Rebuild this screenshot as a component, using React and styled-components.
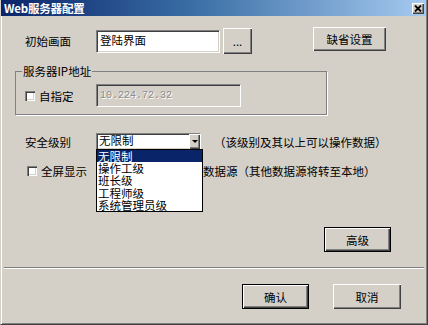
import React from 'react';
import styled, { createGlobalStyle } from 'styled-components';

const LEVELS = ['无限制', '操作工级', '班长级', '工程师级', '系统管理员级'];

const GlobalStyle = createGlobalStyle`
  html, body {
    margin: 0;
    padding: 0;
    background: #d4d0c8;
  }
  body {
    font-family: "Noto Sans CJK SC", "Liberation Sans", sans-serif;
    font-size: 11.5px;
    color: #000;
  }
`;

function App() {
  return (
    <>
      <GlobalStyle />
      <Window>
        <TitleBar>
          <Title>Web服务器配置</Title>
          <CloseButton>
            <svg width="8" height="7" viewBox="0 0 8 7">
              <path d="M1 0.5 L7 6.5 M7 0.5 L1 6.5" stroke="#000" strokeWidth="1.8" />
            </svg>
          </CloseButton>
        </TitleBar>

        <Row $top={11} $h={28}>
          <Label>初始画面</Label>
          <TextBox>登陆界面</TextBox>
          <Button $w={29} $h={26} $ml={3}>...</Button>
          <Button $w={73} $h={24} $ml={61} $mb={4}>缺省设置</Button>
        </Row>

        <Group>
          <Legend>服务器IP地址</Legend>
          <Row $h={23} $left={9}>
            <CheckItem $w={71}>
              <Check />自指定
            </CheckItem>
            <IpBox>10.224.72.32</IpBox>
          </Row>
        </Group>

        <Row $top={18} $h={17}>
          <Label>安全级别</Label>
          <Combo>
            <ComboText>无限制</ComboText>
            <ComboArrow><Arrow /></ComboArrow>
            <DropList>
              {LEVELS.map((l, i) => (
                <DropItem key={l} $active={i === 0}>{l}</DropItem>
              ))}
            </DropList>
          </Combo>
          <Hint $ml={13}>（该级别及其以上可以操作数据）</Hint>
        </Row>

        <Row $top={14} $h={14} $left={24}>
          <CheckItem $w={176}>
            <Check />全屏显示
          </CheckItem>
          <Hint>数据源（其他数据源将转至本地）</Hint>
        </Row>

        <ButtonRow $top={49} $right={34}>
          <Button $w={67} $h={25} $default>高级</Button>
        </ButtonRow>

        <Separator />

        <ButtonRow $top={15} $right={24}>
          <Button $w={67} $h={25} $default>确认</Button>
          <Button $w={68} $h={25} $ml={24}>取消</Button>
        </ButtonRow>
      </Window>
    </>
  );
}

export default App;

const Window = styled.div`
  width: 428px;
  height: 325px;
  box-sizing: border-box;
  display: flex;
  flex-direction: column;
  padding: 0 2px 2px 2px;
  background: #d4d0c8;
  border-style: solid;
  border-width: 0 1px 1px 1px;
  border-color: #d4d0c8 #404040 #404040 #d4d0c8;
  box-shadow: inset 1px 0 0 #fff, inset -1px -1px 0 #808080;
`;

const TitleBar = styled.div`
  height: 16px;
  margin: 0 -1px 0 -2px;
  padding: 0 2px 0 3px;
  display: flex;
  align-items: center;
  justify-content: space-between;
  background: linear-gradient(to right, #0a246a 0%, #3a6ea5 45%, #a6caf0 100%);
`;

const Title = styled.span`
  color: #fff;
  font-weight: bold;
  font-size: 11.5px;
  line-height: 16px;
  letter-spacing: -0.2px;
`;

const CloseButton = styled.div`
  width: 12px;
  height: 11px;
  display: flex;
  align-items: center;
  justify-content: center;
  background: #d4d0c8;
  box-shadow: inset 1px 1px 0 #fff, inset -1px -1px 0 #404040, inset -2px -2px 0 #808080;
`;

const Row = styled.div`
  display: flex;
  align-items: center;
  height: ${p => p.$h}px;
  margin-top: ${p => p.$top || 0}px;
  padding-left: ${p => (p.$left ?? 22)}px;
`;

const ButtonRow = styled.div`
  display: flex;
  justify-content: flex-end;
  margin-top: ${p => p.$top}px;
  padding-right: ${p => p.$right}px;
`;

const Label = styled.span`
  width: 71px;
  flex-shrink: 0;
  line-height: 14px;
`;

const sunken = `
  box-sizing: border-box;
  border-style: solid;
  border-width: 1px;
  border-color: #808080 #fff #fff #808080;
  box-shadow: inset 1px 1px 0 #404040, inset -1px -1px 0 #d4d0c8;
`;

const TextBox = styled.div`
  ${sunken}
  width: 124px;
  height: 23px;
  background: #fff;
  padding: 2px 3px;
  line-height: 15px;
`;

const IpBox = styled.div`
  ${sunken}
  width: 145px;
  height: 23px;
  padding: 5px 3px;
  background: #d4d0c8;
  color: #8c8c8c;
  font-family: "Liberation Mono", "DejaVu Sans Mono", monospace;
  font-size: 10px;
  line-height: 12px;
  text-shadow: 1px 1px 0 #fff;
`;

const Button = styled.div`
  box-sizing: border-box;
  width: ${p => p.$w}px;
  height: ${p => p.$h}px;
  margin-left: ${p => p.$ml || 0}px;
  margin-bottom: ${p => p.$mb || 0}px;
  display: flex;
  align-items: center;
  justify-content: center;
  background: #d4d0c8;
  line-height: 14px;
  border: ${p => (p.$default ? '1px solid #000' : 'none')};
  box-shadow: inset 1px 1px 0 #fff, inset -1px -1px 0 #404040, inset -2px -2px 0 #808080;
`;

const Group = styled.fieldset`
  box-sizing: border-box;
  width: 312px;
  margin: 8px 0 0 12px;
  padding: 5px 0 7px 0;
  border: 1px solid #808080;
  box-shadow: 1px 1px 0 #fff;
  min-inline-size: 0;
`;

const Legend = styled.legend`
  margin-left: 6px;
  padding: 0 1px;
  line-height: 16px;
  font-size: 11.5px;
`;

const CheckItem = styled.label`
  width: ${p => p.$w}px;
  flex-shrink: 0;
  display: flex;
  align-items: center;
  line-height: 14px;
`;

const Check = styled.span`
  width: 10px;
  height: 10px;
  margin-right: 4px;
  flex-shrink: 0;
  background: #fff;
  box-shadow: inset 1px 1px 0 #808080, inset 2px 2px 0 #404040,
    inset -1px -1px 0 #fff, inset -2px -2px 0 #d4d0c8;
`;

const Combo = styled.div`
  ${sunken}
  position: relative;
  width: 105px;
  height: 17px;
  display: flex;
  align-items: stretch;
  background: #fff;
`;

const ComboText = styled.span`
  flex: 1;
  padding-left: 2px;
  line-height: 13px;
`;

const ComboArrow = styled.span`
  width: 11px;
  display: flex;
  align-items: center;
  justify-content: center;
  background: #d4d0c8;
  box-shadow: inset 1px 1px 0 #fff, inset -1px -1px 0 #404040, inset -2px -2px 0 #808080;
`;

const Arrow = styled.span`
  width: 0;
  height: 0;
  border-left: 3px solid transparent;
  border-right: 3px solid transparent;
  border-top: 3px solid #000;
`;

const DropList = styled.div`
  position: absolute;
  top: 100%;
  left: -1px;
  width: 107px;
  box-sizing: border-box;
  border: 1px solid #000;
  background: #fff;
  z-index: 2;
`;

const DropItem = styled.div`
  height: 12.2px;
  padding-left: 1px;
  font-size: 11.5px;
  line-height: 12.2px;
  white-space: nowrap;
  color: ${p => (p.$active ? '#fff' : '#000')};
  background: ${p => (p.$active ? '#0a246a' : 'transparent')};
`;

const Hint = styled.span`
  margin-left: ${p => p.$ml || 0}px;
  white-space: nowrap;
  line-height: 14px;
`;

const Separator = styled.div`
  margin: 15px 1px 0 1px;
  height: 0;
  border-top: 1px solid #808080;
  border-bottom: 1px solid #fff;
`;
